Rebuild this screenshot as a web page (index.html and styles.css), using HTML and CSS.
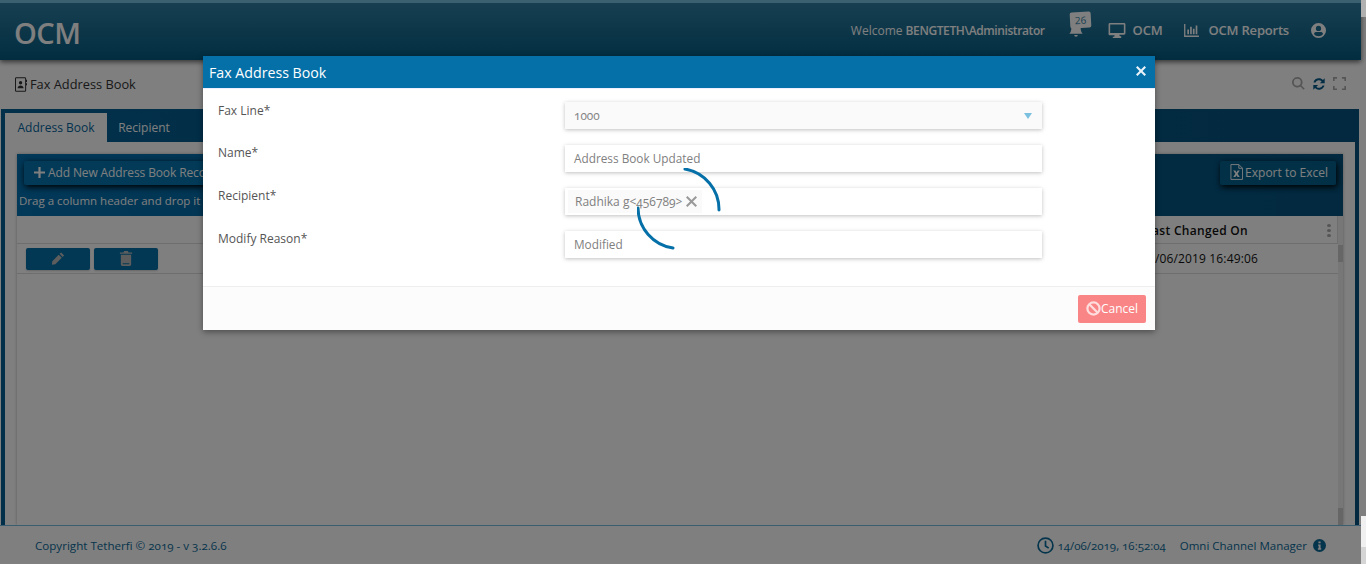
FILE: index.html
```html
<!DOCTYPE html>
<html lang="en">
<head>
  <meta charset="UTF-8" />
  <meta name="viewport" content="width=device-width, initial-scale=1.0"/>
  <title>Fax Address Book</title>
  <link rel="stylesheet" href="styles.css">
</head>
<body>
  <div class="page">
    <header class="topbar">
      <div class="logo">OCM</div>
      <div class="topnav">
        <span class="welcome">Welcome <b>BENGTETH\Administrator</b></span>
        <span class="bell">
          <svg viewBox="0 0 16 16" class="bell-icon"><path d="M8 1a4.600 4.600 0 0 0-4.600 4.600c0 3.600-1 5-2 6.200h13.200c-1-1.200-2-2.600-2-6.200A4.600 4.600 0 0 0 8 1zM6.200 13h3.600a1.800 1.800 0 0 1-3.600 0z"/></svg>
          <span class="bell-count">26</span>
        </span>
        <span class="navitem">
          <svg viewBox="0 0 18 16" class="nav-icon"><path fill-rule="evenodd" d="M1.500 0h15A1.500 1.500 0 0 1 18 1.500v9.500a1.500 1.500 0 0 1-1.500 1.500h-5l.5 1.700h1.500V16h-9v-1.300H6l.5-1.700h-5A1.500 1.500 0 0 1 0 11V1.500A1.500 1.500 0 0 1 1.500 0zM1.700 1.700v8.900h14.600V1.700z"/></svg>
          OCM
        </span>
        <span class="navitem navitem-reports">
          <svg viewBox="0 0 16 14" class="nav-icon chart"><path d="M0 0h1.400v12.400H16V14H0zM3.500 6h1.800v5H3.500zM6.500 3h1.800v8H6.500zM9.500 5h1.800v6H9.500zM12.500 1.500h1.800V11h-1.800z"/></svg>
          OCM Reports
        </span>
        <svg viewBox="0 0 16 16" class="user-icon"><path fill-rule="evenodd" d="M8 0a8 8 0 1 1 0 16A8 8 0 0 1 8 0zm0 3a2.800 2.800 0 1 0 0 5.600A2.800 2.800 0 0 0 8 3zm0 11c2 0 3.700-.9 4.800-2.400-.3-1.200-1.300-1.900-2.400-1.900H5.600c-1.100 0-2.100.7-2.400 1.900C4.300 13.100 6 14 8 14z"/></svg>
      </div>
    </header>

    <div class="titlebar">
      <h1 class="page-title">
        <svg viewBox="0 0 14 17" class="title-icon"><path fill-rule="evenodd" d="M1.500 0h10A1.500 1.500 0 0 1 13 1.500V3h1v2.500h-1V7h1v2.500h-1V15.500a1.500 1.500 0 0 1-1.500 1.500h-10A1.500 1.500 0 0 1 0 15.500v-14A1.500 1.500 0 0 1 1.500 0zm0 1.200a.3.300 0 0 0-.3.300v14c0 .2.100.3.300.3h10c.2 0 .3-.1.300-.3v-14a.3.300 0 0 0-.3-.3zM6.500 4.500a2 2 0 1 1 0 4 2 2 0 0 1 0-4zM3 13c0-2 1.500-3.300 3.500-3.300S10 11 10 13z"/></svg>
        Fax Address Book
      </h1>
      <div class="title-tools">
        <svg viewBox="0 0 16 16" class="tool-icon"><path fill-rule="evenodd" d="M6.500 0a6.500 6.500 0 0 1 5.200 10.400l4 4-1.400 1.400-4-4A6.500 6.500 0 1 1 6.500 0zm0 2.200a4.300 4.300 0 1 0 0 8.600 4.300 4.300 0 0 0 0-8.600z"/></svg>
        <svg viewBox="0 0 16 16" class="tool-icon refresh"><path d="M8 1.500c1.800 0 3.400.7 4.500 1.900L14.500 1.500V7H9l2-2a4.300 4.300 0 0 0-7.100 1.300H1.700A6.500 6.500 0 0 1 8 1.500zM1.500 9H7l-2 2a4.300 4.300 0 0 0 7.100-1.300h2.200A6.500 6.500 0 0 1 3.500 12.600L1.500 14.500z"/></svg>
        <svg viewBox="0 0 16 16" class="tool-icon"><path d="M0 0h5v2H2v3H0zM11 0h5v5h-2V2h-3zM0 11h2v3h3v2H0zM14 11h2v5h-5v-2h3z"/></svg>
      </div>
    </div>

    <section class="tabs">
      <div class="tabstrip">
        <span class="tab tab-active">Address Book</span>
        <span class="tab">Recipient</span>
      </div>
      <div class="tabbody">
        <div class="grid">
          <div class="grid-toolbar">
            <div class="toolbar-row">
              <span class="tb-btn">
                <svg viewBox="0 0 12 12" class="plus-icon"><path d="M4.800 0h2.400v4.800H12v2.400H7.200V12H4.800V7.200H0V4.800h4.800z"/></svg>
                Add New Address Book Record
              </span>
              <span class="tb-btn tb-export">
                <svg viewBox="0 0 14 17" class="excel-icon"><path d="M1 .5h8.500l4 4V16.500H1zM9.500 .5v4h4" fill="none" stroke="currentColor"/><path d="M3.500 7h2.300l1.200 2 1.200-2h2.300L8.200 10.500l2.300 3.500H8.200L7 12l-1.200 2H3.500l2.300-3.500z"/></svg>
                Export to Excel
              </span>
            </div>
            <p class="group-hint">Drag a column header and drop it here to group by that column</p>
          </div>
          <div class="grid-main">
            <div class="grid-table">
              <div class="grid-head">
                <span class="head-label">Last Changed On</span>
                <span class="head-menu"><i></i><i></i><i></i></span>
              </div>
              <div class="grid-row">
                <div class="row-actions">
                  <span class="row-btn">
                    <svg viewBox="0 0 16 16" class="row-icon"><path d="M11.500 1l3.500 3.500-1.700 1.700-3.500-3.500zM8.800 3.700l3.500 3.500L5 14.500 1 15l.5-4z"/></svg>
                  </span>
                  <span class="row-btn">
                    <svg viewBox="0 0 14 16" class="row-icon"><path fill-rule="evenodd" d="M5 0h4l.7 1.500H13.500V3H.5V1.500h3.800zM1.500 4h11v10.500A1.500 1.500 0 0 1 11 16H3a1.500 1.500 0 0 1-1.500-1.500zM3.500 13v1.200h7V13z"/></svg>
                  </span>
                </div>
                <span class="row-date">14/06/2019 16:49:06</span>
              </div>
            </div>
            <div class="grid-scroll">
              <div class="scroll-thumb"></div>
              <div class="scroll-thumb"></div>
            </div>
          </div>
        </div>
      </div>
    </section>

    <footer class="footer">
      <span>Copyright Tetherfi © 2019 - v 3.2.6.6</span>
      <div class="footer-right">
        <svg viewBox="0 0 16 16" class="clock-icon"><circle cx="8" cy="8" r="7" fill="none" stroke="currentColor" stroke-width="1.600"/><path d="M8 3.500V8.500L11 10.500" fill="none" stroke="currentColor" stroke-width="1.600"/></svg>
        <span class="footer-time">14/06/2019, 16:52:04</span>
        <span class="footer-app">Omni Channel Manager</span>
        <svg viewBox="0 0 12 12" class="info-icon"><circle cx="6" cy="6" r="6"/><path d="M5 2.300h2v1.700H5zM4.700 5h2.300v3.600h.6V10H4.500V8.600h.7V6.300h-.5z" fill="#fff"/></svg>
      </div>
    </footer>
  </div>

  <div class="backdrop"></div>
  <div class="page-scroll-thumb"></div>
  <div class="page-corner"></div>

  <div class="modal">
    <div class="modal-head">
      <span>Fax Address Book</span>
      <svg viewBox="0 0 10 10" class="modal-close"><path d="M1.500 0L5 3.500 8.500 0 10 1.500 6.500 5 10 8.500 8.500 10 5 6.500 1.500 10 0 8.500 3.500 5 0 1.500z"/></svg>
    </div>
    <form class="modal-form">
      <label class="field-label">Fax Line*</label>
      <div class="input input-select">
        <span>1000</span>
        <i class="caret"></i>
      </div>
      <label class="field-label">Name*</label>
      <div class="input">Address Book Updated</div>
      <label class="field-label">Recipient*</label>
      <div class="input input-tags">
        <span class="tag">Radhika g&lt;456789&gt; <svg viewBox="0 0 10 10" class="tag-x"><path d="M1.300 0L5 3.700 8.700 0 10 1.300 6.300 5 10 8.700 8.700 10 5 6.300 1.300 10 0 8.700 3.700 5 0 1.300z"/></svg></span>
      </div>
      <label class="field-label">Modify Reason*</label>
      <div class="input">Modified</div>
    </form>
    <div class="modal-foot">
      <span class="btn-cancel">
        <svg viewBox="0 0 16 16" class="cancel-icon"><circle cx="8" cy="8" r="6.500" fill="none" stroke="currentColor" stroke-width="2.400"/><path d="M3.500 3.500L12.500 12.500" stroke="currentColor" stroke-width="2.400"/></svg>Cancel
      </span>
    </div>
  </div>

  <svg viewBox="0 0 84 84" class="spinner"><path d="M48 1A41 41 0 0 1 82 42"/><path d="M1 40A41 41 0 0 0 36 80"/></svg>
</body>
</html>
```

FILE: styles.css
```css
* { margin: 0; padding: 0; box-sizing: border-box; }
html, body { height: 100%; overflow: hidden; }
body { background: #fff; font-family: "Open Sans", "Noto Sans", sans-serif; font-size: 12px; color: #555; }

.page { display: flex; flex-direction: column; height: 564px; width: 1361px; background: #fff; }

/* top bar */
.topbar {
  height: 60px; flex: none;
  display: flex; align-items: center; justify-content: space-between;
  padding: 0 35px 0 14px;
  background: linear-gradient(#7ac0e0 0, #7ac0e0 3px, #2f7fa3 3px, #045a80 100%);
  color: #fff;
  box-shadow: 0 2px 5px rgba(0,0,0,.6);
  position: relative;
}
.logo { font-size: 29px; font-weight: 600; color: #fff; letter-spacing: -.5px; padding-top: 4px; }
.topnav { display: flex; align-items: center; font-size: 13px; color: #fff; }
.welcome { font-size: 12px; margin-right: 23px; }
.welcome b { font-size: 12px; font-weight: 600; letter-spacing: -.4px; }
.bell { position: relative; width: 22px; height: 26px; margin-right: 18px; }
.bell-icon { position: absolute; left: 0; bottom: 5px; width: 16px; height: 16px; fill: #fff; }
.bell-count {
  position: absolute; left: 2px; top: -5px; width: 21px; height: 16px;
  background: #fff; color: #2f7fa3; font-size: 10px; text-align: center; line-height: 16px; border-radius: 2px;
  transform: rotate(-3deg);
}
.navitem { display: flex; align-items: center; gap: 7px; margin-right: 22px; font-weight: 600; letter-spacing: -.2px; }
.navitem-reports { gap: 9px; }
.nav-icon { width: 18px; height: 15px; fill: #fff; }
.chart { width: 15px; height: 13px; }
.user-icon { width: 15px; height: 15px; fill: #fff; }

/* page title */
.titlebar {
  height: 49px; flex: none;
  display: flex; align-items: center; justify-content: space-between;
  padding: 0 15px 1px 15px;
}
.page-title { display: flex; align-items: center; gap: 3px; font-size: 12.800px; font-weight: 400; color: #333; }
.title-icon { width: 12px; height: 15px; fill: #333; }
.title-tools { display: flex; gap: 7px; }
.tool-icon { width: 13px; height: 13px; fill: #aaa; }
.refresh { fill: #045a88; width: 14px; height: 14px; }

/* tabs */
.tabs { flex: 1; display: flex; flex-direction: column; border-left: 4px solid #045f94; border-right: 4px solid #04527e; margin: 0 2px 0 1px; min-height: 0; }
.tabstrip { height: 33px; flex: none; background: linear-gradient(90deg, #045f94, #04527e); padding-top: 4px; display: flex; }
.tab { width: 102px; line-height: 29px; text-align: center; font-size: 12px; font-weight: 500; color: #fff; }
.tab + .tab { width: 74px; }
.tab-active { background: #fff; color: #04649c; height: 29px; }
.tabbody { flex: 1; padding: 12px 12px 0 12px; background: #fff; min-height: 0; }
.grid { height: 100%; display: flex; flex-direction: column; box-shadow: 0 0 3px rgba(0,0,0,.3); }
.grid-toolbar { height: 62px; flex: none; background: linear-gradient(90deg, #0470b0, #04527e); color: #fff; padding: 7px 7px 0 7px; }
.toolbar-row { display: flex; justify-content: space-between; }
.tb-btn {
  display: flex; align-items: center; gap: 3px;
  height: 24px; padding: 0 10px 2px; background: #0474b0; color: #fff; font-size: 12px; font-weight: 500; letter-spacing: -.12px;
  border-radius: 2px; box-shadow: 1px 2px 6px #000;
}
.tb-export { padding: 0 8px 2px 10px; gap: 2px; background: #04628f; letter-spacing: 0; }
.plus-icon { width: 11px; height: 11px; fill: #fff; }
.excel-icon { width: 13px; height: 16px; fill: #fff; color: #fff; }
.group-hint { font-size: 11.500px; font-weight: 500; margin: 8px -5px 0; white-space: nowrap; }
.grid-main { flex: 1; display: flex; min-height: 0; }
.grid-table { flex: 1; min-width: 0; }
.grid-head {
  height: 28px; display: flex; align-items: center; justify-content: flex-end;
  border-bottom: 1px solid #ddd; border-right: 1px solid #ddd; color: #111; font-size: 12px; font-weight: 600; letter-spacing: .3px;
  padding: 1px 6px 0 0;
}
.head-label { margin-right: 79px; }
.head-menu { display: flex; flex-direction: column; gap: 2px; }
.head-menu i { width: 4px; height: 3px; border-radius: 50%; background: #aaa; display: block; }
.grid-row {
  height: 30px; display: flex; align-items: center; justify-content: space-between;
  border-bottom: 1px solid #ddd; padding: 0 80px 0 9px;
}
.row-actions { display: flex; gap: 4px; }
.row-btn { width: 64px; height: 22px; background: #0470a8; border-radius: 2px; display: flex; align-items: center; justify-content: center; box-shadow: 0 1px 2px rgba(0,0,0,.2); }
.row-icon { width: 14px; height: 15px; fill: #bbb; }
.row-date { font-size: 12px; color: #111; letter-spacing: .15px; }
.grid-scroll { width: 5px; background: #eee; flex: none; display: flex; flex-direction: column; justify-content: space-between; padding-top: 29px; }
.scroll-thumb { height: 17px; background: #ccc; }

/* footer */
.footer {
  height: 39px; flex: none; position: relative;
  display: flex; align-items: center; justify-content: space-between;
  padding: 1px 35px 0 35px;
  background: #fff; border-top: 1px solid #74badf;
  color: #0a6a98; font-size: 11.600px;
  font-variant-numeric: oldstyle-nums;
}
.footer-right { display: flex; align-items: center; font-size: 11.500px; }
.clock-icon { width: 17px; height: 17px; margin-right: 4px; }
.footer-time { margin-right: 14px; }
.footer-app { margin-right: 6px; }
.info-icon { width: 13px; height: 13px; fill: #0a6a98; }

/* modal layer */
.backdrop { position: absolute; left: 0; top: 0; width: 1366px; height: 564px; background: rgba(0,0,0,.5); }
.page-scroll-thumb { position: absolute; right: 0; top: 0; width: 5px; height: 17px; background: #b0b0b0; }
.page-corner {
  position: absolute; right: 0; top: 516px; width: 5px; height: 48px;
  background: linear-gradient(#f0f0f0 0, #f0f0f0 31px, #d5d5d5 31px);
}
.modal {
  position: absolute; left: 203px; top: 56px; width: 952px; height: 274px;
  background: #fff; box-shadow: 0 2px 6px rgba(0,0,0,.4);
  display: flex; flex-direction: column;
}
.modal-head {
  height: 33px; flex: none;
  display: flex; align-items: center; justify-content: space-between;
  padding: 1px 9px 0 6px;
  background: #0570a8; color: #fff; font-size: 14.200px; font-weight: 500;
  border-bottom: 1px solid #eef;
}
.modal-close { width: 10px; height: 10px; fill: #e8f2f8; margin-bottom: 3px; }
.modal-form {
  flex: 1;
  display: grid; grid-template-columns: 347px 477px; grid-auto-rows: 27px; row-gap: 16px;
  padding: 13px 0 0 15px;
}
.field-label { font-size: 12px; color: #555; line-height: 17px; margin-top: -1px; }
.field-label:first-child { margin-top: 0; }
.input {
  display: flex; align-items: center; padding: 0 9px 2px;
  height: 27px; background: #fff; font-size: 11.800px; color: #808080;
  box-shadow: 0 1px 4px rgba(0,0,0,.25);
}
.input-select { justify-content: space-between; background: #fafafa; font-variant-numeric: oldstyle-nums; padding-right: 10px; }
.caret { width: 0; height: 0; border-left: 4px solid transparent; border-right: 4px solid transparent; border-top: 6px solid #7cc0e0; margin-top: 2px; }
.input-tags { padding: 0 3px; }
.tag { display: inline-flex; align-items: center; gap: 4px; height: 23px; padding: 0 5px 0 7px; background: #fafafa; font-size: 12px; font-variant-numeric: oldstyle-nums; }
.tag-x { width: 11px; height: 11px; fill: #999; }
.modal-foot {
  height: 44px; flex: none;
  display: flex; align-items: center; justify-content: flex-end;
  padding-right: 9px;
  background: #fcfcfc; border-top: 1px solid #eee;
}
.btn-cancel {
  display: flex; align-items: center;
  width: 68px; height: 28px; padding-left: 8px;
  background: #f98586; color: #fff; font-size: 12px; border-radius: 2px;
}
.cancel-icon { width: 15px; height: 15px; color: #fdd; }

.spinner {
  position: absolute; left: 637px; top: 168px; width: 84px; height: 84px;
  fill: none; stroke: #0570a8; stroke-width: 3; stroke-linecap: round;
}
```
